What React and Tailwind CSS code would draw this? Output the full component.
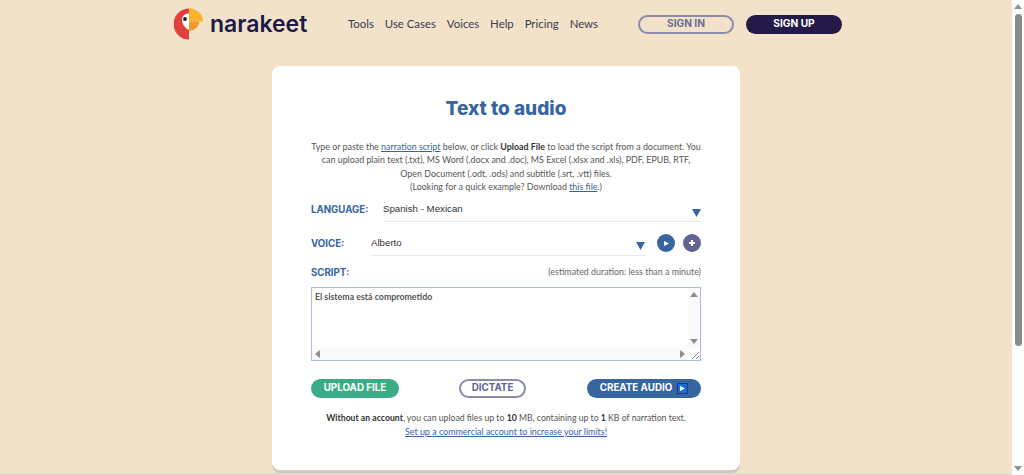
import React from 'react';

const navItems = ['Tools', 'Use Cases', 'Voices', 'Help', 'Pricing', 'News'];

const Logo = () => (
  <svg width="30" height="32" viewBox="0 0 30 32">
    <path d="M15 0.5A15.5 15.5 0 0 0 15 31.5Z" fill="#e2403f" />
    <path d="M15 5.5C11 5.5 8 8 8 12C8 16 11 20 15 22Z" fill="#fff" />
    <circle cx="11" cy="11" r="1.9" fill="#1f1a3d" />
    <path d="M15 0.5C23 0.5 29 6 29 13.5L15 13.5Z" fill="#f9b42d" />
    <path d="M15 13.5H25.5C25 18.5 20 23 15 23Z" fill="#f39a2e" />
  </svg>
);

const Caret = ({ className }) => (
  <svg className={className} width="9" height="8" viewBox="0 0 9 8">
    <path d="M0 0H9L4.5 8Z" fill="#37659f" />
  </svg>
);

const SmallArrow = ({ dir }) => {
  const paths = {
    up: 'M0 5L4 0L8 5Z',
    down: 'M0 0H8L4 5Z',
    left: 'M5 0V8L0 4Z',
    right: 'M0 0V8L5 4Z',
  };
  return (
    <svg width={dir === 'up' || dir === 'down' ? 8 : 5} height={dir === 'up' || dir === 'down' ? 5 : 8}>
      <path d={paths[dir]} fill="#8f8f8f" />
    </svg>
  );
};

export default function App() {
  return (
    <div className="flex h-[475px] w-[1024px] overflow-hidden bg-[#f1e2c9] font-['Lato',sans-serif]">
      <div className="flex min-w-0 flex-1 flex-col">
        {/* Header */}
        <header className="flex h-[47px] shrink-0 items-center pl-[174px] pt-[1px]">
          <Logo />
          <span className="ml-[6px] w-[104px] font-['Inter',sans-serif] text-[23px] font-semibold leading-none text-[#1d1a45]">
            narakeet
          </span>
          <nav className="ml-[34px] flex w-[250px] justify-between font-['Lato',sans-serif] text-[11.4px] text-[#3b3b50]">
            {navItems.map((item) => (
              <a key={item}>{item}</a>
            ))}
          </nav>
          <a className="ml-[40px] flex h-[19px] w-[96px] items-center justify-center rounded-full border-2 border-[#8b8cab] font-['Inter',sans-serif] text-[10.2px] font-bold text-[#6c6e97]">
            SIGN IN
          </a>
          <a className="ml-[12px] flex h-[19px] w-[96px] items-center justify-center rounded-full bg-[#241a48] font-['Inter',sans-serif] text-[10.2px] font-bold text-white">
            SIGN UP
          </a>
        </header>

        {/* Card */}
        <main className="mt-[19px] flex justify-center">
          <section className="h-[404px] w-[468px] shrink-0 rounded-[8px] bg-white px-[39px] pt-[30px] shadow-[0_3px_0_#d2cabd]">
            <h1 className="text-center font-['Inter',sans-serif] text-[19px] font-extrabold leading-[26px] text-[#37659f]">
              Text to audio
            </h1>

            <p className="mt-[18px] text-center text-[8.9px] leading-[13.3px] text-[#555]">
              Type or paste the <a className="text-[#37659f] underline">narration script</a> below, or click{' '}
              <b className="text-[#333]">Upload File</b> to load the script from a document. You
              <br />
              can upload plain text (.txt), MS Word (.docx and .doc), MS Excel (.xlsx and .xls), PDF, EPUB, RTF,
              <br />
              Open Document (.odt, .ods) and subtitle (.srt, .vtt) files.
              <br />
              (Looking for a quick example? Download <a className="text-[#37659f] underline">this file</a>.)
            </p>

            {/* Language */}
            <div className="mt-[6px] flex h-[24px] items-start">
              <label className="w-[72px] pt-[4px] font-['Inter',sans-serif] text-[9.7px] font-bold leading-[14px] text-[#37659f]">
                LANGUAGE:
              </label>
              <div className="flex h-[23px] flex-1 items-start justify-between border-b border-[#e8e8e8]">
                <span className="pt-[3px] font-['Liberation_Sans',sans-serif] text-[9.7px] leading-[14px] text-[#333]">
                  Spanish - Mexican
                </span>
                <Caret className="mt-[10px]" />
              </div>
            </div>

            {/* Voice */}
            <div className="mt-[10px] flex h-[24px] items-start">
              <label className="w-[60px] pt-[4px] font-['Inter',sans-serif] text-[9.7px] font-bold leading-[14px] text-[#37659f]">
                VOICE:
              </label>
              <div className="flex h-[23px] w-[275px] items-start justify-between border-b border-[#e8e8e8]">
                <span className="pt-[3px] font-['Liberation_Sans',sans-serif] text-[9.7px] leading-[14px] text-[#333]">
                  Alberto
                </span>
                <Caret className="mr-[1px] mt-[9px]" />
              </div>
              <button className="ml-[11px] mt-[1px] flex h-[18px] w-[18px] items-center justify-center rounded-full bg-[#37659f]">
                <svg width="5" height="5" viewBox="0 0 5 5">
                  <path d="M0 0L5 2.5L0 5Z" fill="#fff" />
                </svg>
              </button>
              <button className="ml-[8px] mt-[1px] flex h-[18px] w-[18px] items-center justify-center rounded-full bg-[#63648f]">
                <svg width="6" height="6" viewBox="0 0 6 6">
                  <path d="M2 0H4V2H6V4H4V6H2V4H0V2H2Z" fill="#fff" />
                </svg>
              </button>
            </div>

            {/* Script */}
            <div className="mt-[8px] flex items-start justify-between">
              <label className="pt-[1px] font-['Inter',sans-serif] text-[9.7px] font-bold leading-[14px] text-[#37659f]">
                SCRIPT:
              </label>
              <span className="text-[8.9px] leading-[14px] text-[#666]">(estimated duration: less than a minute)</span>
            </div>

            <div className="mt-[7px] grid h-[74px] grid-cols-[1fr_12px] grid-rows-[1fr_12px] border border-[#a9c0dd]">
              <div className="px-[3px] py-[2px] text-[8.8px] font-bold leading-[14px] text-[#555]">
                El sistema está comprometido
              </div>
              <div className="flex flex-col items-center justify-between bg-[#fafafa] py-[4px]">
                <SmallArrow dir="up" />
                <SmallArrow dir="down" />
              </div>
              <div className="flex items-center justify-between bg-[#fafafa] px-[3px]">
                <SmallArrow dir="left" />
                <SmallArrow dir="right" />
              </div>
              <div className="flex items-end justify-end p-[1px]">
                <svg width="8" height="8" viewBox="0 0 8 8">
                  <path d="M1 8L8 1M5 8L8 5" stroke="#888" strokeWidth="1" />
                </svg>
              </div>
            </div>

            {/* Actions */}
            <div className="mt-[18px] flex items-center justify-between font-['Inter',sans-serif] text-[9.8px] font-bold">
              <button className="h-[19px] w-[88px] rounded-full bg-[#3bad84] text-white">UPLOAD FILE</button>
              <button className="ml-[-1px] h-[19px] w-[67px] rounded-full border-2 border-[#8b8cab] text-[#63648f]">
                DICTATE
              </button>
              <button className="flex h-[19px] w-[114px] items-center justify-center gap-[5px] rounded-full bg-[#37659f] text-white">
                CREATE AUDIO
                <span className="flex h-[11px] w-[11px] items-center justify-center border border-[#143f7a] bg-[#1b6fd0]">
                  <svg width="5" height="5" viewBox="0 0 5 5">
                    <path d="M0 0L5 2.5L0 5Z" fill="#fff" />
                  </svg>
                </span>
              </button>
            </div>

            <p className="mt-[13px] text-center text-[8.7px] leading-[13.5px] text-[#555]">
              <b className="text-[#333]">Without an account</b>, you can upload files up to <b className="text-[#333]">10</b>{' '}
              MB, containing up to <b className="text-[#333]">1</b> KB of narration text.
              <br />
              <a className="text-[8.95px] text-[#37659f] underline">Set up a commercial account to increase your limits!</a>
            </p>
          </section>
        </main>

        {/* Top edge of the next section, just visible at the fold */}
        <div className="mt-auto h-[2px] bg-[#d8ddd0]" />
      </div>

      {/* Page scrollbar */}
      <aside className="flex h-full w-[12px] shrink-0 flex-col items-center justify-between bg-[#fdfdfd] py-[4px]">
        <div className="flex flex-col items-center gap-[5px]">
          <SmallArrow dir="up" />
          <div className="h-[332px] w-[7px] rounded-full bg-[#8b8b8b]" />
        </div>
        <SmallArrow dir="down" />
      </aside>
    </div>
  );
}
